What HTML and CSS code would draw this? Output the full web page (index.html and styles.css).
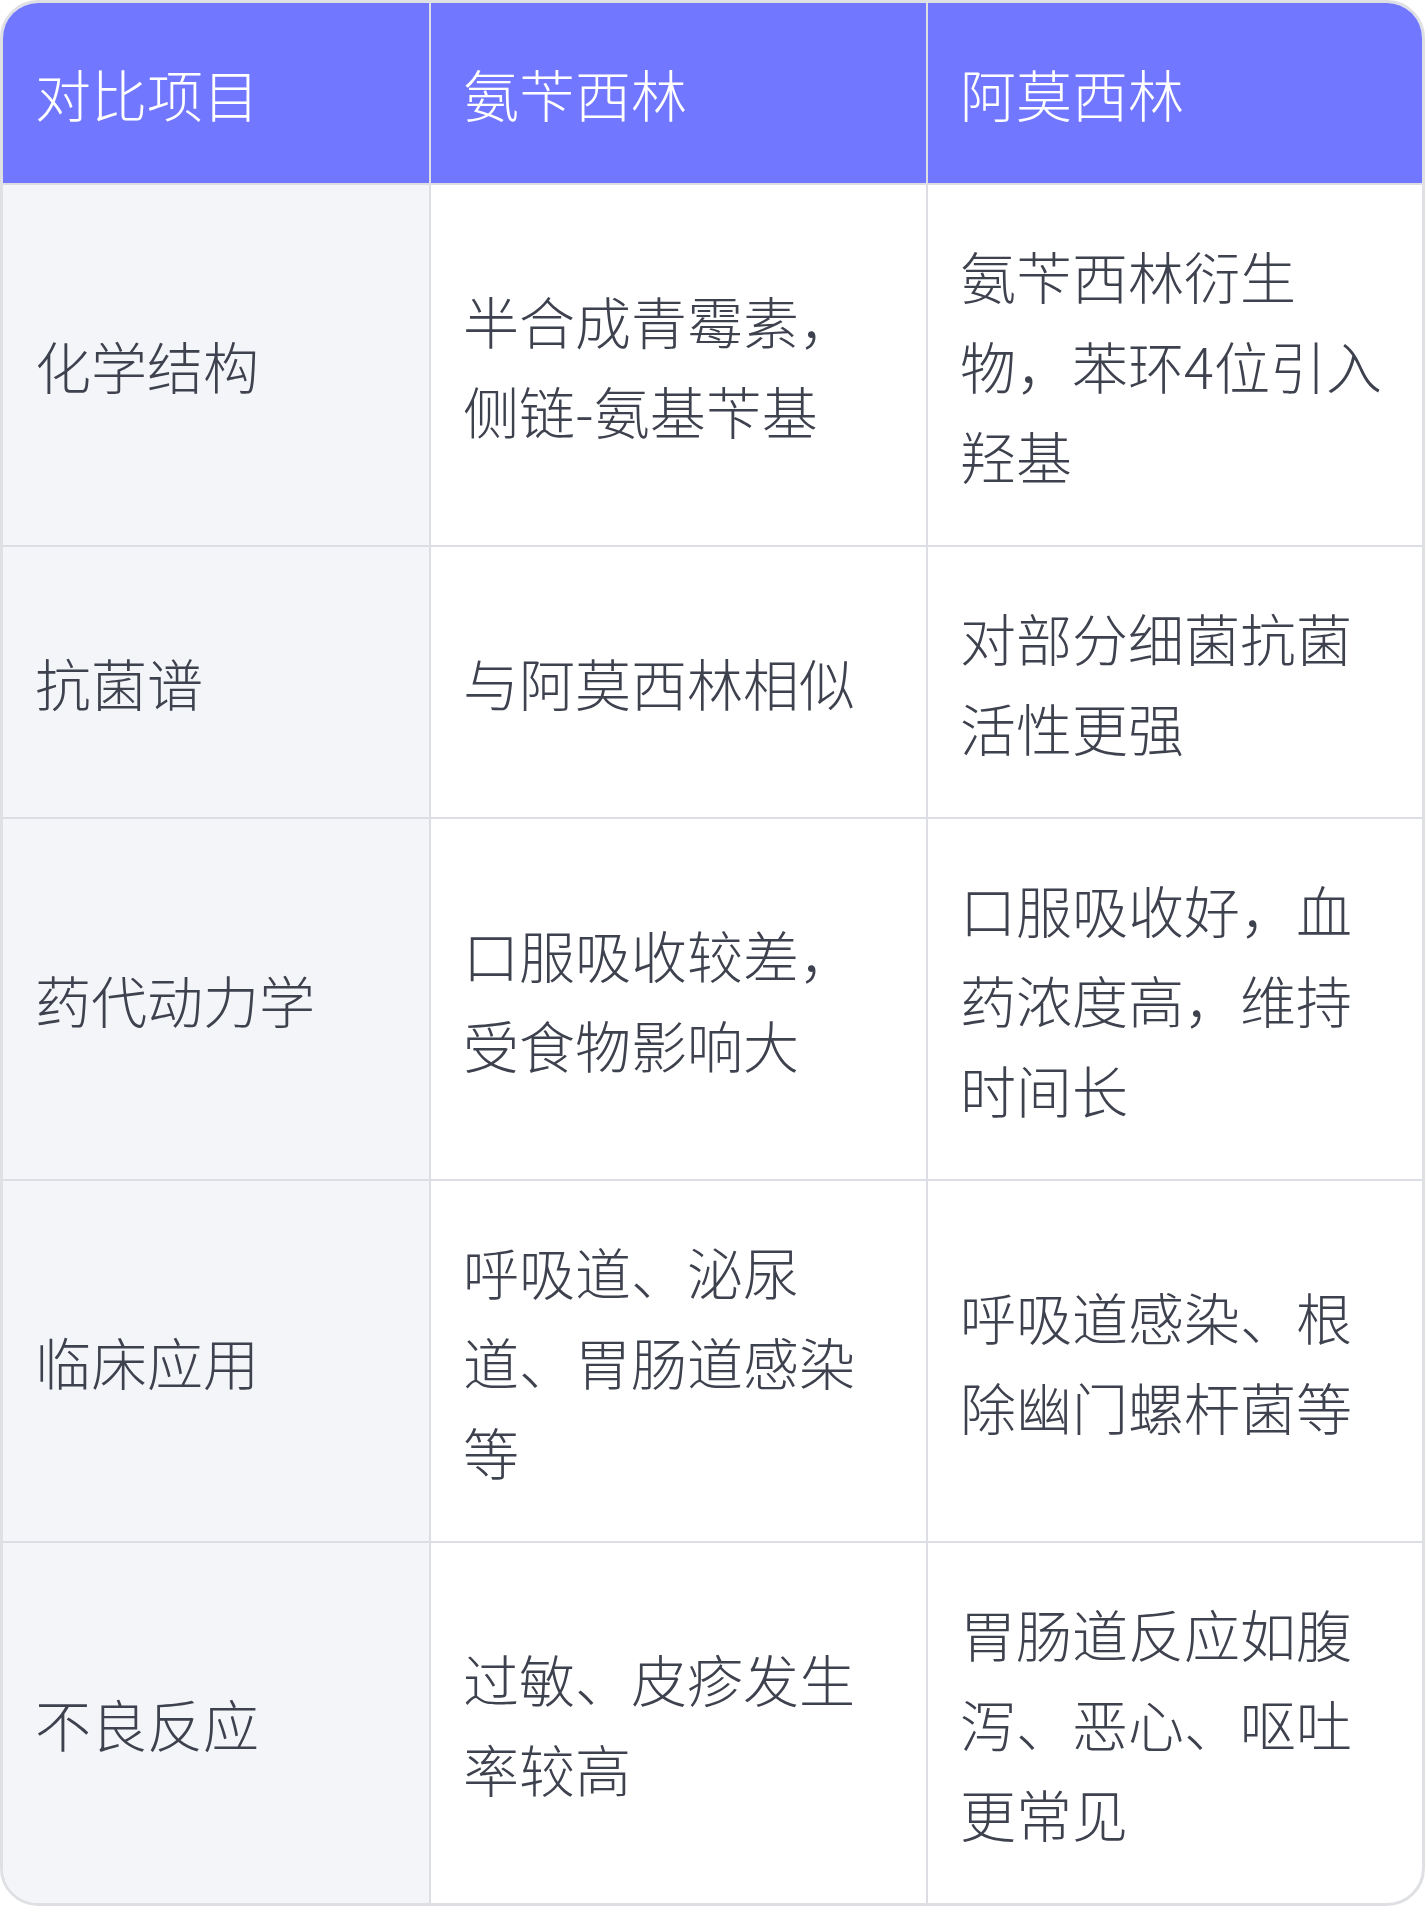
FILE: index.html
```html
<!DOCTYPE html>
<html lang="zh-CN">
<head>
<meta charset="utf-8">
<title>氨苄西林与阿莫西林对比</title>
<link rel="stylesheet" href="styles.css">
</head>
<body>
<div class="card">
  <table class="compare">
    <colgroup>
      <col class="c1">
      <col class="c2">
      <col class="c3">
    </colgroup>
    <thead>
      <tr>
        <th>对比项目</th>
        <th>氨苄西林</th>
        <th>阿莫西林</th>
      </tr>
    </thead>
    <tbody>
      <tr>
        <td class="label">化学结构</td>
        <td>半合成青霉素，侧链-氨基苄基</td>
        <td>氨苄西林衍生物，苯环4位引入羟基</td>
      </tr>
      <tr>
        <td class="label">抗菌谱</td>
        <td>与阿莫西林相似</td>
        <td>对部分细菌抗菌活性更强</td>
      </tr>
      <tr>
        <td class="label">药代动力学</td>
        <td>口服吸收较差，受食物影响大</td>
        <td>口服吸收好，血药浓度高，维持时间长</td>
      </tr>
      <tr>
        <td class="label">临床应用</td>
        <td>呼吸道、泌尿道、胃肠道感染等</td>
        <td>呼吸道感染、根除幽门螺杆菌等</td>
      </tr>
      <tr>
        <td class="label">不良反应</td>
        <td>过敏、皮疹发生率较高</td>
        <td>胃肠道反应如腹泻、恶心、呕吐更常见</td>
      </tr>
    </tbody>
  </table>
</div>
</body>
</html>
```

FILE: styles.css
```css
html, body {
  margin: 0;
  padding: 0;
  background: #ffffff;
}

.card {
  width: 1425px;
  box-sizing: border-box;
  border: 3px solid #dfe0e4;
  border-radius: 38px;
  overflow: hidden;
  background: #ffffff;
}

.compare {
  width: 1419px;
  table-layout: fixed;
  border-collapse: separate;
  border-spacing: 0;
  font-family: "Noto Sans CJK SC", "Noto Sans", sans-serif;
  font-weight: 300;
  font-size: 56px;
  line-height: 90px;
  color: #3e414e;
}

.c1 { width: 426px; }
.c2 { width: 497px; }
.c3 { width: 496px; }

.compare th,
.compare td {
  padding: 45px 33px 45px 32px;
  text-align: left;
  vertical-align: middle;
  border-left: 2px solid #dddee3;
  border-top: 2px solid #dddee3;
  font-weight: 300;
  word-break: break-all;
}

.compare th:first-child,
.compare td:first-child {
  border-left: 0;
}

.compare thead th {
  border-top: 0;
  background: #7177fe;
  color: #ffffff;
}

.compare td.label {
  background: #f4f5f9;
}
```
